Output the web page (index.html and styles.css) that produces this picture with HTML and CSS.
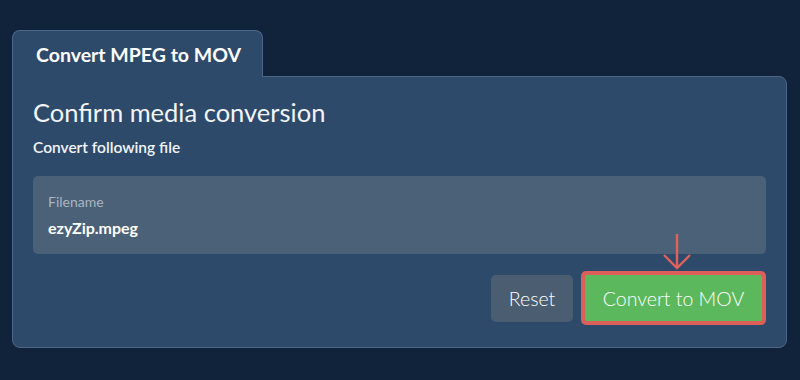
FILE: index.html
```
<!doctype html>
<html>
	<head>
		<title>Convert MPEG to MOV</title>
		<meta charset="utf-8" />
		<link rel="stylesheet" href="styles.css">
	</head>
	<body>
		<div id="wrap">
			<div class="tabs">
				<div class="tab">Convert MPEG to MOV</div>
			</div>
			<div class="panel">
				<h2 class="title">Confirm media conversion</h2>
				<p class="sub">Convert following file</p>
				<div class="field">
					<div class="label">Filename</div>
					<div class="value">ezyZip.mpeg</div>
				</div>
				<div class="actions">
					<button class="btn reset">Reset</button>
					<div class="hl">
						<svg class="arrow" width="30" height="38" viewBox="0 0 30 38">
							<path d="M15 1 L15 35 M2 22 L15 35 L28 22" fill="none" stroke="#e0625b" stroke-width="2.4" />
						</svg>
						<button class="btn convert">Convert to MOV</button>
					</div>
				</div>
			</div>
		</div>
	</body>
</html>
```
FILE: styles.css
```
body {
	margin: 0;
	background-color: #10233a;
	font-family: Lato, "Open Sans", sans-serif;
	color: #f2f4f7;
}

#wrap {
	padding: 30px 13px 0 12px;
}

.tabs {
	display: flex;
}

.tab {
	position: relative;
	z-index: 1;
	width: 251px;
	box-sizing: border-box;
	height: 47px;
	margin-bottom: -1px;
	padding: 12px 0 0 23px;
	background-color: #2d4a6b;
	border: 1px solid #4c6687;
	border-bottom: none;
	border-radius: 8px 8px 0 0;
	font-size: 19.5px;
	font-weight: bold;
	color: #fff;
}

.panel {
	height: 272px;
	box-sizing: border-box;
	background-color: #2d4a6b;
	border: 1px solid #4c6687;
	border-radius: 0 8px 8px 8px;
	padding: 19px 20px 0 20px;
}

.title {
	margin: 0;
	font-size: 25.5px;
	font-weight: normal;
	line-height: 32px;
}

.sub {
	margin: 9px 0 0 0;
	font-size: 15.5px;
	font-weight: 600;
	line-height: 20px;
}

.field {
	margin-top: 19px;
	height: 78px;
	box-sizing: border-box;
	padding: 17px 15px 0 15px;
	background-color: #4b6178;
	border-radius: 5px;
}

.label {
	font-size: 14px;
	color: #a9b5c3;
	line-height: 17px;
}

.value {
	margin-top: 8px;
	font-size: 16px;
	font-weight: bold;
	color: #fff;
	line-height: 20px;
}

.actions {
	display: flex;
	justify-content: flex-end;
	align-items: center;
	margin-top: 17px;
	gap: 8px;
}

.btn {
	font-family: Lato, "Open Sans", sans-serif;
	font-size: 19.5px;
	font-weight: 300;
	color: #fff;
	border: none;
	border-radius: 5px;
	height: 47px;
	cursor: pointer;
}

.reset {
	width: 82px;
	background-color: #4b5d70;
}

.hl {
	position: relative;
	border: 4px solid #dd5f5a;
	border-radius: 5px;
	display: flex;
}

.arrow {
	position: absolute;
	left: 77px;
	top: -42px;
}

.convert {
	width: 177px;
	height: 46px;
	border-radius: 1px;
	background-color: #5cb85c;
}
```
